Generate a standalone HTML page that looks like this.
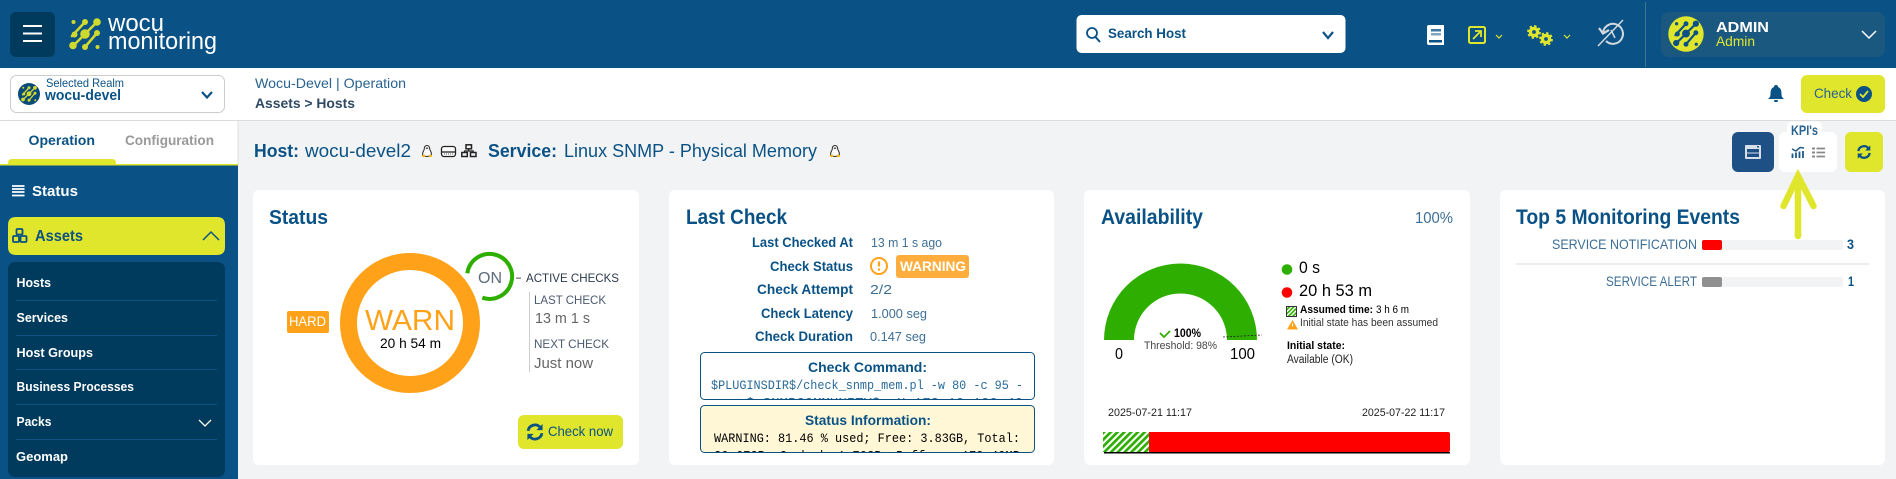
<!DOCTYPE html>
<html lang="en"><head><meta charset="utf-8"><title>Wocu Monitoring</title>
<style>
html,body{margin:0;padding:0;width:1896px;height:479px;overflow:hidden;background:#f2f3f5}
svg{display:block;position:absolute;left:0;top:0}
text{font-family:"Liberation Sans",sans-serif;fill:#0a5285;white-space:pre}
.b{font-weight:700}
.m{font-family:"Liberation Mono",monospace}
.w{fill:#fff}
.k{fill:#000}
.v{fill:#3d6f96}
.g{fill:#5d6b7c}
</style></head><body>
<svg width="1896" height="479" viewBox="0 0 1896 479" xmlns="http://www.w3.org/2000/svg">
<defs>
<g id="lg" stroke="currentColor" fill="currentColor" stroke-linecap="round">
<path d="M85 22 72 36M97 22 73 46M97 33 85 47" stroke-width="2.6" fill="none"/>
<g stroke="none"><circle cx="73.5" cy="22" r="2"/><circle cx="85" cy="22" r="3"/><circle cx="97" cy="22" r="3.8"/><circle cx="74.5" cy="34.5" r="3"/><circle cx="85" cy="34" r="4.8"/><circle cx="97" cy="33" r="3"/><circle cx="73" cy="45.5" r="3.8"/><circle cx="85" cy="47" r="3"/><circle cx="97.5" cy="47" r="2"/></g>
</g>
<g id="sync"><path d="M-6-1A6 6 0 0 1 4.5-4" fill="none" stroke="currentColor" stroke-width="2.4"/><path d="M6.6-7V-1.6H1.2Z" fill="currentColor"/><path d="M6 1A6 6 0 0 1-4.5 4" fill="none" stroke="currentColor" stroke-width="2.4"/><path d="M-6.6 7V1.6H-1.2Z" fill="currentColor"/></g>
<g id="peng"><path d="M6 .5C3.6.5 3.2 3 3.2 4.6 2.4 6 1.4 7.6 1.6 9.4 2 11 4 11.4 6 11.4S10 11 10.4 9.4C10.6 7.6 9.6 6 8.8 4.6 8.8 3 8.4.5 6 .5Z" fill="#fff" stroke="#333" stroke-width="1.1"/><path d="M4.6 3.5C5.2 2 6.8 2 7.4 3.5 6.8 4 5.2 4 4.6 3.5Z" fill="#333"/><path d="M.6 10.3 3.5 9.4 4.4 12H1.5ZM11.4 10.3 8.5 9.4 7.6 12H10.5Z" fill="#f4b21b"/></g>
<pattern id="hatch" patternUnits="userSpaceOnUse" width="4.8" height="4.8" patternTransform="rotate(45)"><rect width="4.8" height="4.8" fill="#fff"/><rect width="2.7" height="4.8" fill="#2eaf00"/></pattern>
<pattern id="hatch2" patternUnits="userSpaceOnUse" width="3" height="3" patternTransform="rotate(45)"><rect width="3" height="3" fill="#fff"/><rect width="1.6" height="3" fill="#2eaf00"/></pattern>
<clipPath id="c1"><rect x="701" y="353" width="333" height="46" rx="4"/></clipPath>
<clipPath id="c2"><rect x="701" y="406" width="333" height="46" rx="4"/></clipPath>
</defs>

<!-- header -->
<rect width="1896" height="68" fill="#0a5285"/>
<rect x="10" y="12" width="45" height="45" rx="6" fill="#003a5d"/>
<path d="M23 26H42M23 33.5H42M23 41H42" stroke="#fff" stroke-width="2"/>
<use href="#lg" color="#cfd92f"/>
<text class="w" x="108" y="31" font-size="24" textLength="56" lengthAdjust="spacingAndGlyphs">wocu</text>
<text class="w" x="108" y="49" font-size="24" textLength="109" lengthAdjust="spacingAndGlyphs">monitoring</text>

<rect x="1076.5" y="15" width="269" height="38" rx="5" fill="#fff"/>
<circle cx="1092" cy="33" r="5" fill="none" stroke="#0a5285" stroke-width="1.8"/><path d="M1095.5 37 1100 42" stroke="#0a5285" stroke-width="2"/>
<text class="b" x="1108" y="38" font-size="14" textLength="78" lengthAdjust="spacingAndGlyphs">Search Host</text>
<path d="M1323 32 1328 38 1333 32" fill="none" stroke="#0a5285" stroke-width="2.2"/>

<path d="M1429 25H1444V45H1429Q1427 45 1427 43V27Q1427 25 1429 25Z" fill="#fff"/>
<rect x="1431" y="29" width="10" height="2.5" fill="#3d7aa3"/><rect x="1431" y="33" width="10" height="2.5" fill="#7fa6c2"/><rect x="1429" y="40" width="13" height="2.5" fill="#0a5285"/>
<rect x="1469" y="27" width="16" height="16" rx="1.5" fill="none" stroke="#dfe62c" stroke-width="2"/>
<path d="M1473 39 1481 31M1475 31H1481V37" fill="none" stroke="#dfe62c" stroke-width="1.8"/>
<path d="M1496 35 1499 38 1502 35" fill="none" stroke="#dfe62c" stroke-width="1.2"/>
<g fill="none" stroke="#dfe62c"><circle cx="1534" cy="32" r="3.6" stroke-width="3.4"/><circle cx="1534" cy="32" r="6" stroke-width="1.8" stroke-dasharray="2.4 2.3"/><circle cx="1546" cy="39" r="3.6" stroke-width="3.4"/><circle cx="1546" cy="39" r="6" stroke-width="1.8" stroke-dasharray="2.4 2.3"/></g>
<path d="M1564 35 1567 38 1570 35" fill="none" stroke="#dfe62c" stroke-width="1.2"/>
<g fill="none" stroke="#d3d8de" stroke-width="2"><path d="M1603 33A10 10 0 1 1 1606 41"/><path d="M1599 28 1603 33.5 1609 30" stroke-width="2.2"/><path d="M1611 30 1615 38M1598 46 1623 20" stroke-width="1.5"/></g>
<rect x="1645" y="2" width="1" height="65" fill="#3f7a80"/>
<rect x="1661" y="12" width="224" height="45" rx="8" fill="#1b5880"/>
<circle cx="1686" cy="34" r="17.7" fill="#dfe62c"/>
<g transform="translate(1686 34) scale(.82) translate(-85 -34.5)"><use href="#lg" color="#0a5285"/></g>
<text class="w b" x="1716" y="32" font-size="15" textLength="53" lengthAdjust="spacingAndGlyphs">ADMIN</text>
<text x="1716" y="46" font-size="14" textLength="39" lengthAdjust="spacingAndGlyphs" style="fill:#dfe62c">Admin</text>
<path d="M1862 31 1869 38 1876 31" fill="none" stroke="#fff" stroke-width="1.5"/>

<!-- sub header -->
<rect y="68" width="1896" height="52" fill="#fff"/>
<rect y="120" width="1896" height="1" fill="#dcdcdc"/>
<rect x="10.5" y="75.5" width="214" height="37" rx="6" fill="#fff" stroke="#ccc"/>
<circle cx="29" cy="94" r="11" fill="#0a4a78"/>
<g transform="translate(29 94) scale(.5) translate(-85 -34.5)"><use href="#lg" color="#cfd92f"/></g>
<text x="46" y="87" font-size="12" textLength="78" lengthAdjust="spacingAndGlyphs">Selected Realm</text>
<text class="b" x="45" y="100" font-size="15" textLength="76" lengthAdjust="spacingAndGlyphs">wocu-devel</text>
<path d="M202 92 207 97.5 212 92" fill="none" stroke="#0a5285" stroke-width="2.2"/>
<text x="255" y="88" font-size="14" textLength="151" lengthAdjust="spacingAndGlyphs" style="fill:#2a6390">Wocu-Devel | Operation</text>
<text class="b" x="255" y="108" font-size="14" textLength="100" lengthAdjust="spacingAndGlyphs" style="fill:#2f4a62">Assets &gt; Hosts</text>
<path d="M1776 85Q1778 85 1778 87C1781 88 1781.5 91 1781.5 94 1781.5 96 1782 97.5 1784 99H1768C1770 97.5 1770.5 96 1770.5 94 1770.5 91 1771 88 1774 87Q1774 85 1776 85Z" fill="#0a5285"/><rect x="1774" y="100" width="4" height="2" rx="1" fill="#0a5285"/>
<rect x="1801" y="75" width="84" height="38" rx="6" fill="#dfe62c"/>
<text x="1814" y="98" font-size="14" textLength="38" lengthAdjust="spacingAndGlyphs" style="fill:#2a6390">Check</text>
<circle cx="1864" cy="94" r="8" fill="#0a5285"/><path d="M1860 94 1863 97 1868 91" fill="none" stroke="#dfe62c" stroke-width="1.8"/>

<!-- sidebar -->
<rect y="121" width="238" height="44" fill="#fff"/>
<rect y="165" width="238" height="314" fill="#0a5285"/>
<rect x="237.5" y="121" width="1" height="44" fill="#ddd"/>
<rect y="164" width="238" height="1.5" fill="#dfe62c"/>
<path d="M8 165V163Q8 159 12 159H112Q116 159 116 163V165Z" fill="#dfe62c"/>
<text class="b" x="28.5" y="145" font-size="14" textLength="66.5" lengthAdjust="spacingAndGlyphs">Operation</text>
<text class="b" x="125" y="145" font-size="14" textLength="89" lengthAdjust="spacingAndGlyphs" style="fill:#999">Configuration</text>
<path d="M12 186H24.5M12 189H24.5M12 192H24.5M12 195.5H24.5" stroke="#fff" stroke-width="1.8"/>
<text class="w b" x="32" y="196" font-size="15" textLength="46" lengthAdjust="spacingAndGlyphs">Status</text>
<path d="M16 217H217Q225 217 225 225V247Q225 255 217 255H16Q8 255 8 247V225Q8 217 16 217Z" fill="#dfe62c"/>
<g fill="none" stroke="#0a5285" stroke-width="1.8"><rect x="16.5" y="229" width="6" height="5.5" rx="1"/><rect x="13" y="236" width="6" height="6" rx="1"/><rect x="20.5" y="236" width="6" height="6" rx="1"/></g>
<text class="b" x="35" y="241" font-size="16" textLength="48" lengthAdjust="spacingAndGlyphs">Assets</text>
<path d="M203 240 211 232 219 240" fill="none" stroke="#0a5285" stroke-width="1.5"/>
<rect x="8" y="262" width="217" height="215" rx="7" fill="#003a5d"/>
<path d="M16 300.5H217M16 335.5H217M16 369.5H217M16 404.5H217M16 439.5H217" stroke="#0a5285"/>
<g font-size="13" font-weight="700">
<text class="w" x="16.5" y="287" textLength="34.5" lengthAdjust="spacingAndGlyphs">Hosts</text>
<text class="w" x="16.5" y="322" textLength="51.5" lengthAdjust="spacingAndGlyphs">Services</text>
<text class="w" x="16.5" y="357" textLength="76.5" lengthAdjust="spacingAndGlyphs">Host Groups</text>
<text class="w" x="16.5" y="391" textLength="117.5" lengthAdjust="spacingAndGlyphs">Business Processes</text>
<text class="w" x="16.5" y="426" textLength="35" lengthAdjust="spacingAndGlyphs">Packs</text>
<text class="w" x="16" y="461" textLength="52" lengthAdjust="spacingAndGlyphs">Geomap</text>
</g>
<path d="M199 420 205 426 211 420" fill="none" stroke="#fff" stroke-width="1.3"/>

<!-- title -->
<text class="b" x="254" y="157" font-size="18" textLength="45" lengthAdjust="spacingAndGlyphs">Host:</text>
<text x="305" y="157" font-size="18" textLength="106" lengthAdjust="spacingAndGlyphs">wocu-devel2</text>
<use href="#peng" x="421" y="145"/>
<g fill="none" stroke="#222" stroke-width="1.3"><rect x="441.5" y="146.5" width="14" height="10" rx="2.5" fill="#fff"/><path d="M442 152H455"/></g><path d="M444 154H453" stroke="#555" stroke-dasharray="1 1"/>
<g fill="none" stroke="#222" stroke-width="1.5"><rect x="466" y="144.8" width="5.5" height="4"/><rect x="461.8" y="152.5" width="5.5" height="4"/><rect x="470.5" y="152.5" width="5.5" height="4"/><path d="M468.7 149V151H464.5V152.5M468.7 151H473.2V152.5" stroke-width="1.2"/></g>
<text class="b" x="488" y="157" font-size="18" textLength="69" lengthAdjust="spacingAndGlyphs">Service:</text>
<text x="564" y="157" font-size="18" textLength="253" lengthAdjust="spacingAndGlyphs">Linux SNMP - Physical Memory</text>
<use href="#peng" x="829" y="145"/>

<!-- toolbar -->
<rect x="1732" y="132" width="42" height="40" rx="6" fill="#1e4f85"/>
<rect x="1745" y="145" width="16" height="14" rx="1" fill="#d7dfe9"/>
<rect x="1747" y="149" width="12" height="3.5" fill="#1e4f85"/><rect x="1747" y="153.5" width="12" height="3.5" fill="#1e4f85"/><rect x="1757" y="146" width="2" height="1.5" fill="#1e4f85"/>
<rect x="1779" y="132" width="58" height="40" rx="6" fill="#fff"/>
<rect x="1787" y="121.5" width="35" height="16" rx="5" fill="#fff"/>
<text class="b" x="1791" y="135" font-size="14" textLength="27" lengthAdjust="spacingAndGlyphs" style="fill:#2a6390">KPI's</text>
<path d="M1792 149 1796 151 1800 147.5 1804 148" fill="none" stroke="#1e5a8a" stroke-width="1.5"/>
<path d="M1792.5 158V153.5M1796 158V152.5M1799.5 158V151.5M1803 158V151" stroke="#1e5a8a" stroke-width="1.8"/>
<path d="M1812 148.5H1815M1812 152.5H1815M1812 156.5H1815" stroke="#888" stroke-width="2"/><path d="M1816.5 148.5H1825M1816.5 152.5H1825M1816.5 156.5H1825" stroke="#888" stroke-width="1.8"/>
<rect x="1845" y="132" width="38" height="40" rx="6" fill="#dfe62c"/>
<g transform="translate(1864 152) scale(.95)" color="#0a5285"><use href="#sync"/></g>

<!-- cards -->
<rect x="253" y="190" width="386" height="275" rx="6" fill="#fff"/>
<rect x="669" y="190" width="385" height="275" rx="6" fill="#fff"/>
<rect x="1084" y="190" width="386" height="275" rx="6" fill="#fff"/>
<rect x="1500" y="190" width="385" height="275" rx="6" fill="#fff"/>

<!-- status -->
<text class="b" x="269" y="224" font-size="20" textLength="59" lengthAdjust="spacingAndGlyphs">Status</text>
<path d="M467.3 273.3A22.5 22.5 0 1 1 482.3 297.7" fill="none" stroke="#2eaf00" stroke-width="4"/>
<circle cx="410" cy="323" r="61.5" fill="none" stroke="#ffa21a" stroke-width="17"/>
<text x="365" y="330" font-size="29" textLength="90" lengthAdjust="spacingAndGlyphs" style="fill:#ffa21a">WARN</text>
<text class="k" x="380" y="348" font-size="14" textLength="61" lengthAdjust="spacingAndGlyphs">20 h 54 m</text>
<rect x="287" y="311" width="42" height="22" rx="2" fill="#ffa21a"/>
<text class="w" x="289" y="326" font-size="14" textLength="37" lengthAdjust="spacingAndGlyphs">HARD</text>
<text class="g" x="478" y="283" font-size="16" textLength="24" lengthAdjust="spacingAndGlyphs">ON</text>
<rect x="516" y="277.5" width="5" height="1.3" fill="#777"/>
<text x="526" y="282" font-size="12" textLength="93" lengthAdjust="spacingAndGlyphs" style="fill:#2b3a4a">ACTIVE CHECKS</text>
<rect x="529" y="292" width="1" height="80" fill="#ccc"/>
<text x="534" y="304" font-size="12" textLength="72" lengthAdjust="spacingAndGlyphs" style="fill:#4a5a70">LAST CHECK</text>
<text x="535" y="323" font-size="15" textLength="55" lengthAdjust="spacingAndGlyphs" style="fill:#666">13 m 1 s</text>
<text x="534" y="348" font-size="12" textLength="75" lengthAdjust="spacingAndGlyphs" style="fill:#4a5a70">NEXT CHECK</text>
<text x="534" y="368" font-size="15" textLength="59" lengthAdjust="spacingAndGlyphs" style="fill:#666">Just now</text>
<rect x="518" y="415" width="105" height="34" rx="6" fill="#dfe62c"/>
<g transform="translate(535 432) scale(1.15)" color="#0a5285"><use href="#sync"/></g>
<text x="548" y="436" font-size="14" textLength="65" lengthAdjust="spacingAndGlyphs">Check now</text>

<!-- last check -->
<text x="686" y="224" font-size="21" font-weight="700" textLength="101" lengthAdjust="spacingAndGlyphs">Last Check</text>
<g font-size="14" font-weight="700">
<text x="752" y="247" textLength="101" lengthAdjust="spacingAndGlyphs">Last Checked At</text>
<text x="770" y="271" textLength="83" lengthAdjust="spacingAndGlyphs">Check Status</text>
<text x="757" y="294" textLength="96" lengthAdjust="spacingAndGlyphs">Check Attempt</text>
<text x="761" y="318" textLength="92" lengthAdjust="spacingAndGlyphs">Check Latency</text>
<text x="755" y="341" textLength="98" lengthAdjust="spacingAndGlyphs">Check Duration</text>
</g>
<g font-size="13">
<text class="v" x="871" y="247" textLength="71" lengthAdjust="spacingAndGlyphs">13 m 1 s ago</text>
<text class="v" x="870" y="294" textLength="22" lengthAdjust="spacingAndGlyphs">2/2</text>
<text class="v" x="871" y="318" textLength="56" lengthAdjust="spacingAndGlyphs">1.000 seg</text>
<text class="v" x="870" y="341" textLength="56" lengthAdjust="spacingAndGlyphs">0.147 seg</text>
</g>
<circle cx="879" cy="266" r="8" fill="#fff" stroke="#ffa21a" stroke-width="2"/>
<path d="M879 261.5V266.5" stroke="#ffa21a" stroke-width="2.2"/><circle cx="879" cy="269.5" r="1.2" fill="#ffa21a"/>
<rect x="896" y="255" width="73" height="23" rx="3" fill="#ffae3d"/>
<text class="w b" x="900" y="271" font-size="14" textLength="66" lengthAdjust="spacingAndGlyphs">WARNING</text>

<rect x="700.5" y="352.5" width="334" height="47" rx="4" fill="#fff"/>
<text class="b" x="808" y="372" font-size="14" textLength="119" lengthAdjust="spacingAndGlyphs">Check Command:</text>
<g clip-path="url(#c1)">
<text class="m" x="711" y="389" font-size="13" textLength="312" lengthAdjust="spacingAndGlyphs" style="fill:#2a6a9a">$PLUGINSDIR$/check_snmp_mem.pl -w 80 -c 95 -</text>
<text class="m" x="746" y="406.500" font-size="13" textLength="277" lengthAdjust="spacingAndGlyphs" style="fill:#2a6a9a">$_SNMPCOMMUNITY$ -H 172.19.100.40</text>
</g>
<rect x="700.5" y="352.5" width="334" height="47" rx="4" fill="none" stroke="#0a5285"/>
<rect x="700.5" y="405.5" width="334" height="47" rx="4" fill="#fff7d6"/>
<text class="b" x="805" y="425" font-size="14" textLength="126" lengthAdjust="spacingAndGlyphs">Status Information:</text>
<g clip-path="url(#c2)">
<text class="m k" x="714" y="442" font-size="13" textLength="306" lengthAdjust="spacingAndGlyphs">WARNING: 81.46 % used; Free: 3.83GB, Total:</text>
<text class="m k" x="714" y="459.500" font-size="13" textLength="306" lengthAdjust="spacingAndGlyphs">20.67GB, Cached: 1.70GB, Buffers: 179.40MB</text>
</g>
<rect x="700.5" y="405.5" width="334" height="47" rx="4" fill="none" stroke="#0a5285"/>

<!-- availability -->
<text x="1101" y="224" font-size="21" font-weight="700" textLength="102" lengthAdjust="spacingAndGlyphs">Availability</text>
<text class="v" x="1415" y="223" font-size="16" textLength="38" lengthAdjust="spacingAndGlyphs">100%</text>
<path d="M1104 340A76.5 76.5 0 0 1 1257 340H1227A46.5 46.5 0 0 0 1134 340Z" fill="#2eaf00"/>
<path d="M1223 337 1262 335" stroke="#222" stroke-width=".8" stroke-dasharray="2 1.5"/>
<path d="M1160 333 1164 337 1170 331" fill="none" stroke="#2eaf00" stroke-width="1.8"/>
<text class="k b" x="1174" y="337" font-size="12" textLength="27" lengthAdjust="spacingAndGlyphs">100%</text>
<text x="1144" y="349" font-size="11" textLength="73" lengthAdjust="spacingAndGlyphs" style="fill:#444">Threshold: 98%</text>
<text class="k" x="1115" y="359" font-size="16" textLength="8" lengthAdjust="spacingAndGlyphs">0</text>
<text class="k" x="1230" y="359" font-size="16" textLength="25" lengthAdjust="spacingAndGlyphs">100</text>
<circle cx="1287" cy="269.5" r="5.3" fill="#2eaf00"/>
<text class="k" x="1299" y="273" font-size="17" textLength="21" lengthAdjust="spacingAndGlyphs">0 s</text>
<circle cx="1287" cy="292.5" r="5.3" fill="#f00"/>
<text class="k" x="1299" y="296" font-size="17" textLength="73" lengthAdjust="spacingAndGlyphs">20 h 53 m</text>
<rect x="1286.5" y="306.5" width="10" height="10" fill="url(#hatch2)" stroke="#333"/>
<text class="k b" x="1300" y="313" font-size="11" textLength="73" lengthAdjust="spacingAndGlyphs">Assumed time:</text>
<text class="k" x="1376" y="313" font-size="11" textLength="33" lengthAdjust="spacingAndGlyphs">3 h 6 m</text>
<path d="M1292.5 320 1298 329.5H1287Z" fill="#ffa21a"/><path d="M1292.5 323.5V326.5" stroke="#fff"/>
<text x="1300" y="326" font-size="11" textLength="138" lengthAdjust="spacingAndGlyphs" style="fill:#333">Initial state has been assumed</text>
<text class="k b" x="1287" y="349" font-size="11" textLength="58" lengthAdjust="spacingAndGlyphs">Initial state:</text>
<text x="1287" y="363" font-size="11.5" textLength="66" lengthAdjust="spacingAndGlyphs" style="fill:#222">Available (OK)</text>
<text x="1108" y="416" font-size="11" textLength="84" lengthAdjust="spacingAndGlyphs" style="fill:#222">2025-07-21 11:17</text>
<text x="1362" y="416" font-size="11" textLength="83" lengthAdjust="spacingAndGlyphs" style="fill:#222">2025-07-22 11:17</text>
<rect x="1104" y="452" width="346" height="1.5" fill="#000"/>
<path d="M1149 432H1448Q1450 432 1450 434V450Q1450 452 1448 452H1149Z" fill="#f00"/>
<rect x="1103" y="432" width="46" height="20" fill="url(#hatch)"/>

<!-- top 5 -->
<text x="1516" y="224" font-size="21" font-weight="700" textLength="224" lengthAdjust="spacingAndGlyphs">Top 5 Monitoring Events</text>
<text class="v" x="1552" y="249" font-size="14" textLength="145" lengthAdjust="spacingAndGlyphs">SERVICE NOTIFICATION</text>
<rect x="1702" y="240" width="141" height="10" rx="2" fill="#f2f3f5"/><rect x="1702" y="240" width="20" height="10" rx="2" fill="#f00"/>
<text x="1847" y="249" font-size="14" textLength="7" lengthAdjust="spacingAndGlyphs" font-weight="700">3</text>
<rect x="1516" y="263.5" width="353" height="1" fill="#d8d8d8"/>
<text class="v" x="1606" y="286" font-size="14" textLength="91" lengthAdjust="spacingAndGlyphs">SERVICE ALERT</text>
<rect x="1702" y="277" width="141" height="10" rx="2" fill="#f2f3f5"/><rect x="1702" y="277" width="20" height="10" rx="2" fill="#909090"/>
<text x="1848" y="286" font-size="14" textLength="6" lengthAdjust="spacingAndGlyphs" font-weight="700">1</text>

<!-- arrow -->
<path d="M1798 236V176M1783.5 206 1798 176 1813.5 206" fill="none" stroke="#dfe62c" stroke-width="6.5" stroke-linecap="round" stroke-linejoin="miter"/>
</svg>
</body></html>
